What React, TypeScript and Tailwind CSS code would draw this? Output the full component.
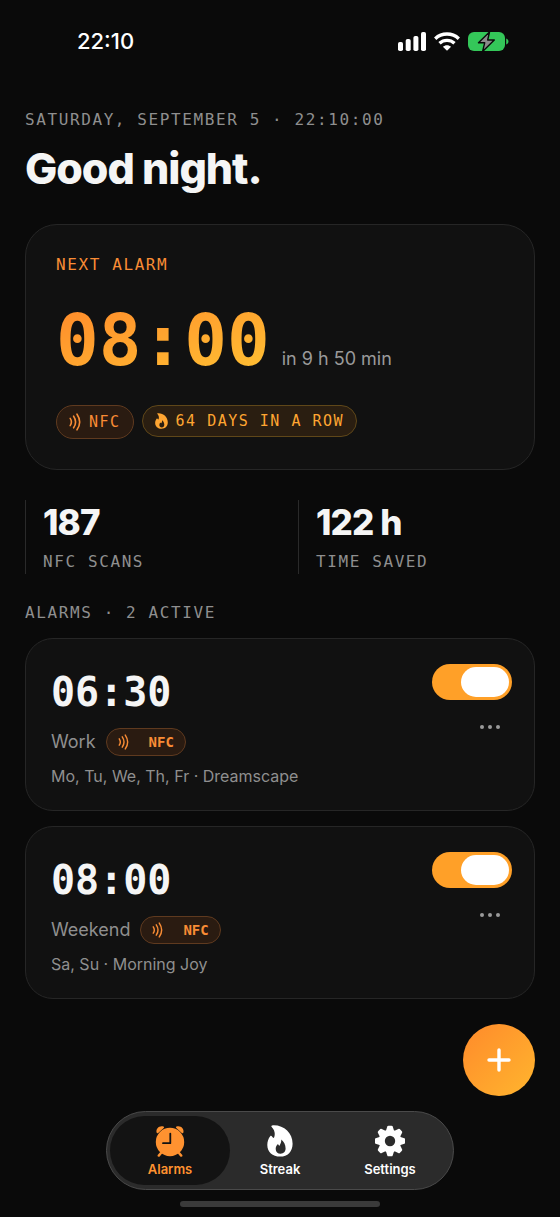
import { useState } from 'react';

const MONO = "font-['DejaVu_Sans_Mono',monospace]";
const LABEL = `${MONO} text-base leading-6 tracking-widest text-[#8f8f8f] uppercase`;

interface Alarm {
  id: string;
  time: string;
  name: string;
  detail: string;
}

const ALARMS: Alarm[] = [
  { id: 'work', time: '06:30', name: 'Work', detail: 'Mo, Tu, We, Th, Fr · Dreamscape' },
  { id: 'weekend', time: '08:00', name: 'Weekend', detail: 'Sa, Su · Morning Joy' },
];

const STATS = [
  { value: '187', label: 'NFC scans' },
  { value: '122 h', label: 'Time saved' },
];

function WavesIcon({ className }: { className?: string }) {
  return (
    <svg viewBox="0 0 12 18" fill="none" stroke="currentColor" strokeWidth="1.6" strokeLinecap="round" className={className}>
      <path d="M1.2 5.4c1.5 2.2 1.5 5 0 7.2" />
      <path d="M4.6 3.2c2.4 3.5 2.4 8.1 0 11.6" />
      <path d="M8 1.2c3.3 4.8 3.3 10.8 0 15.6" />
    </svg>
  );
}

function FlameIcon({ className }: { className?: string }) {
  return (
    <svg viewBox="0 0 26 32" fill="currentColor" className={className}>
      <path
        fillRule="evenodd"
        d="M5.2.4C16.500-.4 25.600 7.600 25.600 18.700c0 7.900-5 12.900-12.400 12.900C5.500 31.600.3 26.900.3 20c0-3.500 1.100-6.400 2.900-8.700.5-.7 1.400-.6 1.800.1.500.8 1.100 1.400 1.900 1.700C8.500 9.100 7.900 5.300 4.700 2c-.6-.7-.4-1.500.5-1.600ZM14.200 14.500c.4 2.900-.9 4.400-1.600 6.200-.9-.3-1.300-.9-1.600-1.700-1.500 1.300-2.300 3-2.300 4.900 0 3 2 4.900 4.900 4.900 3 0 5-2.100 5-5.200 0-3.900-1.800-7.100-4.400-9.100Z"
      />
    </svg>
  );
}

function AlarmIcon({ className }: { className?: string }) {
  return (
    <svg viewBox="0 0 30 32" className={className}>
      <g fill="currentColor">
        <circle cx="15" cy="17" r="14.200" />
        <path d="M1.600 7.600C.6 3.500 4.500.2 8.400 1.500c.8.3.9 1 .3 1.500L3.200 8c-.6.500-1.400.4-1.600-.4ZM28.400 7.600c1-4.100-2.900-7.400-6.800-6.100-.8.3-.9 1-.3 1.500L26.800 8c.6.500 1.400.4 1.600-.4Z" />
      </g>
      <path d="M6 28l-2.200 2.600M24 28l2.200 2.600" stroke="currentColor" strokeWidth="2.400" strokeLinecap="round" />
      <path d="M15.300 8.600v9.600H8" fill="none" stroke="#131313" strokeWidth="1.800" strokeLinecap="round" strokeLinejoin="round" />
    </svg>
  );
}

function GearIcon({ className }: { className?: string }) {
  return (
    <svg viewBox="-15 -16 30 32" fill="currentColor" className={className}>
      <mask id="gear-hole">
        <rect x="-16" y="-16" width="32" height="32" fill="white" />
        <circle r="5.200" fill="black" />
      </mask>
      <g mask="url(#gear-hole)">
        <circle r="11.200" />
        {[0, 45, 90, 135].map((angle) => (
          <path
            key={angle}
            transform={`rotate(${angle})`}
            d="M-4-10.500-2.700-14.400q.3-.9 1.200-.9h3q.9 0 1.200.9l1.300 3.900v21l-1.300 3.900q-.3.900-1.200.9h-3q-.9 0-1.200-.9l-1.300-3.900Z"
          />
        ))}
      </g>
    </svg>
  );
}

function StatusBar() {
  return (
    <header className="flex h-[82px] items-center justify-between pr-[51px] pl-[77px]">
      <span className="text-[22px] leading-7 font-medium text-white">22:10</span>
      <div className="flex items-center gap-2">
        <svg viewBox="0 0 28 19" fill="white" className="h-[19px] w-7">
          <rect x="0" y="10" width="5" height="9" rx="1.800" />
          <rect x="7.700" y="7" width="5" height="12" rx="1.800" />
          <rect x="15.400" y="4" width="5" height="15" rx="1.800" />
          <rect x="23" y="0" width="5" height="19" rx="1.800" />
        </svg>
        <svg viewBox="0 0 26 19" fill="none" stroke="white" strokeWidth="3.400" className="h-[19px] w-[26px]">
          <path d="M1.200 6.700c6.700-6.200 16.900-6.200 23.600 0" />
          <path d="M5.500 11.300c4.300-3.900 10.700-3.900 15 0" />
          <path d="M13 18.800 8.900 14.800c2.300-2.100 5.900-2.100 8.200 0Z" fill="white" stroke="none" />
        </svg>
        <svg viewBox="0 0 41 21" className="h-[21px] w-[41px]">
          <rect x="0" y="1" width="37" height="19" rx="6" fill="#34c759" />
          <path d="M38.200 7.500c3 1 3 5 0 6Z" fill="#34c759" />
          <path d="M21.500 1 10.500 11.800h6.200L14.600 20.400 26.300 9h-6.600Z" fill="#8b8b8b" stroke="#0a0a0a" strokeWidth="1.400" strokeLinejoin="round" />
        </svg>
      </div>
    </header>
  );
}

function NextAlarm() {
  return (
    <section className="mt-7 rounded-[32px] border border-[#262626] bg-[#111111] px-[30px] pt-7 pb-[30px]">
      <h2 className={`${MONO} text-base leading-6 tracking-widest text-[#f98c35] uppercase`}>Next alarm</h2>
      <div className="mt-7 flex items-baseline gap-3">
        <span className={`${MONO} bg-linear-to-br from-[#ff8a2b] to-[#ffc233] bg-clip-text text-[71px] leading-[72px] font-bold text-transparent`}>
          08:00
        </span>
        <span className="text-lg leading-6 text-[#9a9a9a]">in 9 h 50 min</span>
      </div>
      <div className={`${MONO} mt-7 flex gap-2 text-[15px] leading-5 tracking-widest`}>
        <span className="flex h-[34px] items-center gap-2 rounded-full border border-[#5f3a1f] bg-[#2a1b11] px-3 text-[#f98c35]">
          <WavesIcon className="h-[18px] w-3" />
          NFC
        </span>
        <span className="flex h-8 items-center gap-2 rounded-full border border-[#5f4719] bg-[#2a1e11] px-3 text-[#ffa632]">
          <FlameIcon className="h-4 w-[13px]" />
          64 DAYS IN A ROW
        </span>
      </div>
    </section>
  );
}

function AlarmCard({ alarm }: { alarm: Alarm }) {
  const [enabled, setEnabled] = useState(true);

  return (
    <li className="flex justify-between rounded-[28px] border border-[#262626] bg-[#111111] pt-[25px] pr-[22px] pb-[22px] pl-[25px]">
      <div>
        <div className={`${MONO} mt-1 text-[40px] leading-[48px] font-bold text-[#f5f5f5]`}>{alarm.time}</div>
        <div className="mt-3 flex items-center gap-[10px]">
          <span className="text-lg leading-7 text-[#8f8f8f]">{alarm.name}</span>
          <span className={`${MONO} flex h-7 items-center gap-5 rounded-full border border-[#5f3a1f] bg-[#2a1b11] px-[11px] text-sm font-bold text-[#f98c35]`}>
            <WavesIcon className="h-4 w-[11px]" />
            NFC
          </span>
        </div>
        <p className="mt-2 text-base leading-6 text-[#8f8f8f]">{alarm.detail}</p>
      </div>
      <div className="flex flex-col items-end">
        <input
          type="checkbox"
          role="switch"
          aria-label={`${alarm.name} alarm`}
          checked={enabled}
          onChange={(e) => setEnabled(e.target.checked)}
          className="flex h-9 w-20 cursor-pointer appearance-none items-center rounded-full bg-[#3a3a3a] px-[3px] before:h-[30px] before:w-12 before:rounded-full before:bg-white checked:justify-end checked:bg-[#ffa028]"
        />
        <button type="button" aria-label={`${alarm.name} options`} className="mt-[11px] mr-3 flex h-8 items-center gap-1">
          <span className="size-1 rounded-full bg-[#9a9a9a]" />
          <span className="size-1 rounded-full bg-[#9a9a9a]" />
          <span className="size-1 rounded-full bg-[#9a9a9a]" />
        </button>
      </div>
    </li>
  );
}

const TABS = [
  { id: 'alarms', label: 'Alarms', Icon: AlarmIcon },
  { id: 'streak', label: 'Streak', Icon: FlameIcon },
  { id: 'settings', label: 'Settings', Icon: GearIcon },
];

function TabBar() {
  const [active, setActive] = useState('alarms');

  return (
    <nav className="mx-auto mt-[15px] flex rounded-full border border-[#4a4a4a] bg-[#2b2b2b] px-[3px] py-1">
      {TABS.map(({ id, label, Icon }) => (
        <button
          key={id}
          type="button"
          onClick={() => setActive(id)}
          className={`-ml-[10px] flex h-[69px] w-[120px] flex-col items-center justify-center gap-1 rounded-full first:ml-0 ${
            active === id ? 'bg-[#131313] text-[#ff9230]' : 'text-white'
          }`}
        >
          <Icon className="h-8 w-[30px]" />
          <span className="text-[13px] leading-4 font-semibold">{label}</span>
        </button>
      ))}
    </nav>
  );
}

export default function App() {
  return (
    <div className="flex min-h-screen flex-col bg-[#0a0a0a] font-['Inter',sans-serif]">
      <StatusBar />
      <main className="px-[25px] pt-[26px]">
        <p className={LABEL}>Saturday, September 5 · 22:10:00</p>
        <h1 className="mt-2 text-[43px] leading-[56px] font-extrabold tracking-tight text-[#f5f5f5]">Good night.</h1>

        <NextAlarm />

        <dl className="mt-[30px] grid grid-cols-2 gap-9">
          {STATS.map((stat) => (
            <div key={stat.label} className="flex flex-col-reverse gap-[6px] border-l border-[#2a2a2a] pl-[17px]">
              <dt className={LABEL}>{stat.label}</dt>
              <dd className="text-[35px] leading-[44px] font-extrabold tracking-tight text-[#f5f5f5]">{stat.value}</dd>
            </div>
          ))}
        </dl>

        <h2 className={`${LABEL} mt-[27px]`}>Alarms · {ALARMS.length} active</h2>
        <ul className="mt-[13px] flex flex-col gap-[15px]">
          {ALARMS.map((alarm) => (
            <AlarmCard key={alarm.id} alarm={alarm} />
          ))}
        </ul>
      </main>

      <div className="mt-auto flex flex-col px-[25px] pt-6">
        <button
          type="button"
          aria-label="Add alarm"
          className="flex size-[72px] items-center justify-center self-end rounded-full bg-linear-to-br from-[#ff8a2b] to-[#ffb52e]"
        >
          <svg viewBox="0 0 24 24" stroke="white" strokeWidth="3.400" strokeLinecap="round" className="size-6">
            <path d="M12 2v20M2 12h20" />
          </svg>
        </button>
        <TabBar />
        <div className="mx-auto mt-[11px] mb-[10px] h-1.5 w-[200px] rounded-full bg-[#3a3a3a]" />
      </div>
    </div>
  );
}
